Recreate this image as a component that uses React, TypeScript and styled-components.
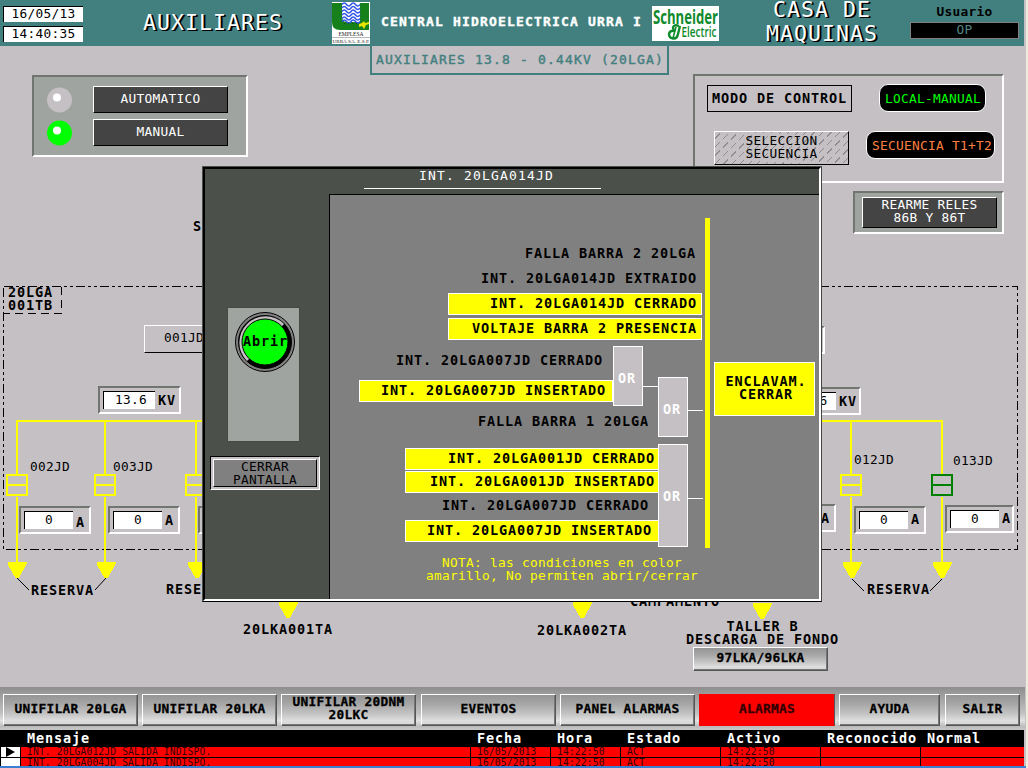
import React from "react";
import styled, { createGlobalStyle, css } from "styled-components";

const C = {
  face: "#c5c0c4",
  teal: "#427f7f",
  slate: "#4b504b",
  steel: "#a0a4a0",
  shade: "#707570",
  yellow: "#ffff00",
  button: "#444444",
};

const Global = createGlobalStyle`
  * { box-sizing: border-box; }
  body { margin: 0; background: ${C.face}; overflow: hidden; }
`;

/* Monospaced text with an exact character advance. */
const type = (size: number, advance: number, weight = 400) => css`
  font-family: "DejaVu Sans Mono", "Liberation Mono", monospace;
  font-size: ${size}px;
  font-weight: ${weight};
  letter-spacing: ${(advance - size * 0.602).toFixed(3)}px;
  white-space: pre;
`;
const thin = css`${type(12.8, 8)} line-height: 13px;`;
const wide = css`${type(13.5, 9, 700)} line-height: 13px;`;
const heavy = css`${type(12.8, 8, 700)} line-height: 13px;`;

const sunken = css`
  border: 2px solid;
  border-color: ${C.shade} #fff #fff ${C.shade};
`;
const raised = css`
  border: 1px solid;
  border-color: #fff #000 #000 #fff;
`;

const Screen = styled.div`
  width: 1028px;
  height: 768px;
  display: flex;
  flex-direction: column;
  overflow: hidden;
  background: ${C.face};
  border-right: 2px solid #efecdc;
`;

/* ---------- header ---------- */
const Header = styled.header`
  flex: none;
  width: 1024px;
  height: 46px;
  display: flex;
  align-items: flex-start;
  background: ${C.teal};
`;
const Clock = styled.div`
  width: 80px;
  margin: 6px 0 0 3px;
  display: flex;
  flex-direction: column;
  gap: 4px;
`;
const ClockCell = styled.div`
  ${thin}
  height: 16px;
  background: #fff;
  border-top: 1px solid #000;
  border-left: 1px solid #000;
  text-align: center;
`;
const BigTitle = styled.h1<{ $left: number; $top: number; $w: number }>`
  ${type(21.5, 14)}
  line-height: 24px;
  margin: ${(p) => p.$top}px 0 0 ${(p) => p.$left}px;
  width: ${(p) => p.$w}px;
  flex: none;
  color: #fff;
  text-align: center;
  text-shadow: 1px 1px 0 #000, 2px 1px 0 #000;
`;
const Logo = styled.svg<{ $left: number; $top: number }>`
  display: block;
  flex: none;
  margin: ${(p) => p.$top}px 0 0 ${(p) => p.$left}px;
`;
const Plant = styled.div`
  ${type(13, 9, 700)}
  line-height: 13px;
  width: 261px;
  flex: none;
  margin: 15px 0 0 11px;
  color: #fff;
  -webkit-text-stroke: 0.4px #fff;
`;
const User = styled.div`
  width: 109px;
  margin: 5px 0 0 31px;
  text-align: center;
`;
const UserLabel = styled.div`${heavy}`;
const UserField = styled.div`
  ${thin}
  margin-top: 4px;
  height: 17px;
  background: #000;
  border: 1px solid #808080;
  color: #4f8686;
  line-height: 14px;
`;

/* ---------- stage ---------- */
const Stage = styled.main`
  flex: none;
  position: relative;
  height: 641px;
`;
const TopRow = styled.div`
  height: 170px;
  display: flex;
  align-items: flex-start;
`;
const ModePanel = styled.section`
  ${sunken}
  flex: none;
  width: 216px;
  height: 82px;
  margin: 29px 0 0 32px;
  padding: 9px 18px 0 13px;
  display: flex;
  flex-direction: column;
  gap: 6px;
  background: ${C.steel};
`;
const ModeRow = styled.div`
  display: flex;
  align-items: center;
  justify-content: space-between;
  height: 27px;
`;
const DarkButton = styled.button`
  ${thin}
  ${raised}
  width: 135px;
  height: 27px;
  padding: 0 0 2px;
  background: ${C.button};
  color: #fff;
`;
const Tab = styled.div`
  ${type(13, 9, 400)}
  -webkit-text-stroke: 0.4px ${C.teal};
  flex: none;
  width: 299px;
  height: 31px;
  margin: -2px 0 0 122px;
  border: 2px solid ${C.teal};
  background: ${C.face};
  color: ${C.teal};
  line-height: 28px;
  padding-left: 4px;
`;
const RightColumn = styled.div`
  flex: none;
  width: 311px;
  margin: 28px 0 0 24px;
  display: flex;
  flex-direction: column;
  align-items: flex-end;
`;
const ControlPanel = styled.section`
  ${sunken}
  width: 311px;
  height: 109px;
  padding: 8px 7px 0 12px;
`;
const ControlRow = styled.div<{ $l: number; $r: number; $t: number }>`
  display: flex;
  justify-content: space-between;
  padding: 0 ${(p) => p.$r}px 0 ${(p) => p.$l}px;
  margin-top: ${(p) => p.$t}px;
`;
const ModeLabel = styled.div`
  ${wide}
  width: 145px;
  height: 27px;
  margin-top: 1px;
  border: 1px solid #000;
  text-align: center;
  line-height: 24px;
`;
const Pill = styled.div<{ $w: number; $color: string }>`
  ${thin}
  width: ${(p) => p.$w}px;
  height: 28px;
  border: 1px solid #fff;
  border-radius: 9px;
  background: #000;
  color: ${(p) => p.$color};
  padding-left: 5px;
  line-height: 27px;
`;
const SequenceButton = styled.button`
  ${thin}
  width: 135px;
  height: 34px;
  padding: 0 0 2px;
  border: 1px solid;
  border-color: #fff #000 #000 #fff;
  background: repeating-linear-gradient(to right, transparent 0 5px, ${C.face} 5px 8px),
    repeating-linear-gradient(135deg, ${C.face} 0 4px, #8f8c8f 4px 5px, ${C.face} 5px 6px);
  color: #000;
`;
const ResetPanel = styled.section`
  ${sunken}
  width: 151px;
  height: 43px;
  margin-top: 8px;
  padding: 4px 5px 0 7px;
  background: ${C.steel};
`;
const ResetButton = styled(DarkButton)`
  display: block;
  height: 31px;
  padding: 0 0 3px;
`;

/* ---------- mimic diagram ---------- */
const ORIGIN = 216;
const Mimic = styled.section`
  position: relative;
  height: 471px;
`;
const Lines = styled.svg`
  position: absolute;
  left: 0;
  top: 0;
`;
const Tag = styled.div<{ $x: number; $y: number; $thin?: boolean }>`
  ${(p) => (p.$thin ? thin : wide)}
  position: absolute;
  left: ${(p) => p.$x}px;
  top: ${(p) => p.$y - ORIGIN - 2}px;
  text-align: center;
`;
const Meter = styled.div<{ $x: number; $y: number; $w: number }>`
  ${sunken}
  position: absolute;
  left: ${(p) => p.$x}px;
  top: ${(p) => p.$y - ORIGIN}px;
  width: ${(p) => p.$w}px;
  height: 28px;
  padding: 3px 0 0 3px;
  display: flex;
  gap: 3px;
  background: ${C.face};
`;
const MeterValue = styled.div<{ $w: number }>`
  ${thin}
  flex: none;
  width: ${(p) => p.$w}px;
  height: 18px;
  border-top: 1px solid #000;
  border-left: 1px solid #000;
  background: #fff;
  text-align: center;
  line-height: 16px;
  padding-left: ${(p) => (p.$w > 50 ? 3 : 0)}px;
`;
const MeterUnit = styled.div<{ $drop: number }>`
  ${wide}
  margin-top: ${(p) => p.$drop}px;
`;
const FeederButton = styled.div<{ $x: number; $y: number }>`
  ${thin}
  ${raised}
  position: absolute;
  left: ${(p) => p.$x}px;
  top: ${(p) => p.$y - ORIGIN}px;
  width: 90px;
  height: 28px;
  padding-left: 19px;
  line-height: 24px;
`;
const Stub = styled.div`
  ${sunken}
  position: absolute;
  left: 760px;
  top: ${326 - ORIGIN}px;
  width: 65px;
  height: 28px;
`;
const metal = css`
  background: linear-gradient(#959595 0%, #a6a6a6 30%, #c6c6c6 65%, #dedede 85%, #d6d6d6 100%);
  border: 1px solid;
  border-color: #fff #555 #555 #fff;
  box-shadow: inset -1px -1px 0 #777;
`;
const SubButton = styled.button`
  ${heavy}
  ${metal}
  -webkit-text-stroke: 0.3px #000;
  position: absolute;
  left: 693px;
  top: ${647 - ORIGIN}px;
  width: 135px;
  height: 24px;
  padding: 0 0 4px;
  color: #000;
`;

/* ---------- dialog ---------- */
const Dialog = styled.div`
  position: absolute;
  left: 202px;
  top: 120px;
  width: 620px;
  height: 436px;
  border: 1px solid;
  border-color: ${C.slate} #444 #000 ${C.slate};
`;
const DialogFrame = styled.div`
  width: 618px;
  height: 434px;
  border: 2px solid;
  border-color: #000 #fff #fff #000;
  background: ${C.slate};
  display: flex;
  flex-direction: column;
`;
const DialogTitle = styled.div`
  ${type(13, 9)}
  height: 25px;
  line-height: 14px;
  color: #fff;
  display: flex;
  justify-content: center;
  padding-right: 60px;
`;
const TitleRule = styled.div`
  width: 237px;
  height: 20px;
  padding-left: 9px;
  border-bottom: 1px solid #fff;
  text-align: center;
`;
const DialogBody = styled.div`
  flex: 1;
  display: flex;
`;
const Commands = styled.div`
  flex: none;
  width: 124px;
  display: flex;
  flex-direction: column;
  padding-top: 114px;
`;
const OpenCard = styled.div`
  width: 71px;
  height: 133px;
  margin-left: 23px;
  padding: 4px 0 0 7px;
  background: ${C.steel};
  outline: 1px solid #464a46;
`;
const OpenButton = styled.div`
  position: relative;
  width: 60px;
  height: 60px;
`;
const OpenLabel = styled.span`
  ${wide}
  position: absolute;
  left: 8px;
  top: 23px;
`;
const CloseFrame = styled.div`
  width: 110px;
  height: 34px;
  margin: 15px 0 0 5px;
  border: 1px solid;
  border-color: #000 #fff #fff #000;
  background: ${C.face};
  padding: 2px;
`;
const CloseButton = styled.button`
  ${thin}
  display: block;
  width: 104px;
  height: 28px;
  padding: 0 0 4px;
  border: 1px solid;
  border-color: #fff #000 #000 #fff;
  background: #808080;
  color: #000;
`;
const Workspace = styled.div`
  flex: none;
  width: 490px;
  border-left: 1px solid #000;
  border-top: 1px solid #000;
  background: #808080;
  display: flex;
  align-items: flex-start;
`;
const Logic = styled.div`
  flex: none;
  width: 375px;
  padding-top: 48px;
`;
const Group = styled.div<{ $left: number; $top: number; $h: number }>`
  display: flex;
  align-items: flex-start;
  height: ${(p) => p.$h}px;
  margin: ${(p) => p.$top}px 0 0 ${(p) => p.$left}px;
`;
const Conditions = styled.div<{ $top?: number; $w?: number }>`
  flex: none;
  width: ${(p) => p.$w ?? 254}px;
  padding-top: ${(p) => p.$top ?? 0}px;
`;
const Condition = styled.div<{ $on?: boolean; $gap?: number; $pad: number; $w?: number }>`
  ${wide}
  width: ${(p) => p.$w ?? 254}px;
  height: 22px;
  margin-top: ${(p) => p.$gap ?? 0}px;
  padding-right: ${(p) => p.$pad - 1}px;
  border: 1px solid ${(p) => (p.$on ? "#fff" : "transparent")};
  background: ${(p) => (p.$on ? C.yellow : "transparent")};
  text-align: right;
  line-height: 18px;
`;
const Gate = styled.div<{ $top: number; $h: number; $text: number }>`
  ${wide}
  position: relative;
  flex: none;
  width: 30px;
  height: ${(p) => p.$h}px;
  margin-top: ${(p) => p.$top}px;
  padding: ${(p) => p.$text}px 0 0 4px;
  border: 1px solid #fff;
  background: ${C.face};
  color: #fff;
`;
const Wire = styled.div<{ $top: number }>`
  flex: none;
  width: 15px;
  height: 1px;
  margin-top: ${(p) => p.$top}px;
  background: #fff;
`;
const Note = styled.p`
  ${thin}
  width: 290px;
  margin: 9px 0 0 87px;
  color: ${C.yellow};
  text-align: center;
`;
const Rail = styled.div`
  flex: none;
  width: 5px;
  height: 330px;
  margin-top: 23px;
  background: ${C.yellow};
`;
const Interlock = styled.div`
  ${wide}
  flex: none;
  width: 101px;
  height: 54px;
  margin: 167px 0 0 4px;
  padding: 12px 0 0 3px;
  border: 1px solid #fff;
  background: ${C.yellow};
  text-align: center;
`;

/* ---------- navigation ---------- */
const Nav = styled.nav`
  flex: none;
  width: 1025px;
  height: 43px;
  padding: 7px 0 0 3px;
  display: flex;
  background: linear-gradient(#8e8e8e 0%, #a2a2a2 25%, #c2c2c2 62%, #e2e2e2 78%, #bcbcbc 92%, #c8c8c8 100%);
`;
const NavButton = styled.button<{ $w: number; $gap: number; $alarm?: boolean }>`
  ${heavy}
  ${metal}
  -webkit-text-stroke: 0.3px ${(p) => (p.$alarm ? "#300" : "#000")};
  flex: none;
  width: ${(p) => p.$w}px;
  height: 32px;
  margin-right: ${(p) => p.$gap}px;
  padding: 0 0 4px;
  color: #000;
  ${(p) => p.$alarm && css`background: #f00; border-color: #f00 #555 #f00 #f00; box-shadow: none; color: #300;`}
`;

/* ---------- alarm table ---------- */
const columns = css`
  display: grid;
  grid-template-columns: 20px 450px 80px 70px 100px 100px 100px 104px;
  width: 1024px;
`;
const AlarmTable = styled.section`
  flex: none;
  height: 36px;
  overflow: hidden;
  width: 1024px;
  background: #000;
`;
const AlarmHead = styled.div`
  ${wide}
  ${columns}
  height: 17px;
  color: #fff;
  line-height: 16px;
`;
const HeadCell = styled.span`padding-left: 7px;`;
const AlarmRow = styled.div`
  ${type(9.6, 5.95)}
  ${columns}
  height: 10px;
  margin-bottom: 1px;
  line-height: 10px;
  color: #300;
`;
const AlarmCell = styled.span`
  margin-left: 1px;
  padding-left: 6px;
  background: #f00;
  overflow: hidden;
  height: 10px;
`;
const Marker = styled.span`
  margin-left: 1px;
  height: 10px;
  background: #fff;
`;
const TaskLine = styled.div`
  flex: none;
  height: 2px;
  background: #3a7fd0;
`;

const Led = ({ color }: { color: string }) => (
  <svg width="26" height="26" viewBox="0 0 26 26">
    <circle cx="12.5" cy="13" r="12.5" fill={color} />
    <circle cx="10" cy="10.5" r="4" fill="#fff" />
  </svg>
);

const UrraLogo = () => (
  <Logo $left={48} $top={2} width="38" height="42" viewBox="0 0 38 42">
    <rect width="38" height="42" fill="#fff" />
    <path d="M0 1H10V14Q10 20 15 20H28V1H37V28H8Q0 28 0 20Z" fill="#16811b" />
    {[2.5, 6, 9.5, 13, 16.5, 19.5].map((y) => (
      <path
        key={y}
        d={`M10 ${y}q2.2-3 4.5 0t4.5 0t4.5 0t4.5 0`}
        fill="none"
        stroke="#3156e8"
        strokeWidth="1.6"
      />
    ))}
    <path d="M27 22l3-1l2-2l1 2l4-1v2l-3 1l-2 4l-2-3l-3 1z" fill="#e6e600" />
    <path d="M12 21.5h15" stroke="#0a4d10" strokeDasharray="1 3" />
    <text x="6.5" y="33.5" fontFamily="Liberation Serif, serif" fontSize="5.5" textLength="25" fill="#222">EMPLESA</text>
    <path d="M0 35.5h38" stroke="#999" strokeWidth=".7" />
    <text x="0.5" y="40.6" fontFamily="Liberation Serif, serif" fontSize="5" textLength="37" lengthAdjust="spacingAndGlyphs" fill="#222">URRÁ SA. E.S.P.</text>
  </Logo>
);

const SchneiderLogo = () => (
  <Logo $left={10} $top={6} width="67" height="35" viewBox="0 0 67 35">
    <rect width="67" height="35" fill="#fff" />
    <text x="1" y="18" fontFamily="Open Sans, sans-serif" fontWeight="700" fontSize="20" textLength="65" lengthAdjust="spacingAndGlyphs" fill="#0f8a2c">Schneider</text>
    <text x="29.5" y="31" fontFamily="Open Sans, sans-serif" fontWeight="600" fontSize="13.5" textLength="35" lengthAdjust="spacingAndGlyphs" fill="#0f8a2c">Electric</text>
    <path
      d="M27 20q-5-2-6 1.500q0 2.500 2 3.500q-5-1-6 3q0 4 4 4.500q4 .500 5-4.500l2-8"
      fill="none"
      stroke="#0f8a2c"
      strokeWidth="2.4"
    />
    <path d="M24 21l-3 11" stroke="#0f8a2c" strokeWidth="1.6" />
  </Logo>
);

const Arrow = ({ x, y }: { x: number; y: number }) => (
  <path d={`M${x - 9.5} ${y}h19v2l-7.500 14h-3.500l-8-14z`} fill={C.yellow} />
);

const Feeder = ({ x, color = C.yellow, ax = x }: { x: number; color?: string; ax?: number }) => (
  <g>
    <path d={`M${x} 421V474M${x} 497V563`} stroke={C.yellow} strokeWidth="2" />
    <rect x={x - 10} y="475" width="20" height="20" fill="none" stroke={color} strokeWidth="2" />
    <path d={`M${x - 10} 485h20`} stroke={color} strokeWidth="2" />
    <Arrow x={ax} y={562} />
  </g>
);

const Reading = (p: { x: number; y: number; w: number; field: number; value: string; unit: string; drop: number }) => (
  <Meter $x={p.x} $y={p.y} $w={p.w}>
    <MeterValue $w={p.field}>{p.value}</MeterValue>
    <MeterUnit $drop={p.drop}>{p.unit}</MeterUnit>
  </Meter>
);

const tags: [number, number, string, boolean?][] = [
  [193, 222, "S"],
  [8, 288, "20LGA\n001TB"],
  [30, 462, "002JD", true],
  [113, 462, "003JD", true],
  [854, 455, "012JD", true],
  [953, 456, "013JD", true],
  [31, 586, "RESERVA"],
  [166, 585, "RESERVA"],
  [867, 585, "RESERVA"],
  [243, 625, "20LKA001TA"],
  [537, 626, "20LKA002TA"],
  [630, 597, "CAMPAMENTO"],
  [686, 622, "TALLER B\nDESCARGA DE FONDO"],
];

const navItems: [string, number, number, boolean?][] = [
  ["UNIFILAR 20LGA", 135, 4],
  ["UNIFILAR 20LKA", 135, 4],
  ["UNIFILAR 20DNM\n20LKC", 135, 5],
  ["EVENTOS", 135, 4],
  ["PANEL ALARMAS", 135, 4],
  ["ALARMAS", 136, 4, true],
  ["AYUDA", 101, 5],
  ["SALIR", 75, 0],
];

const alarms = [
  ["INT. 20LGA012JD SALIDA INDISPO.", "16/05/2013", "14:22:50", "ACT", "14:22:50", "", ""],
  ["INT. 20LGA004JD SALIDA INDISPO.", "16/05/2013", "14:22:50", "ACT", "14:22:50", "", ""],
];

export default function App() {
  return (
    <Screen>
      <Global />
      <Header>
        <Clock>
          <ClockCell>16/05/13</ClockCell>
          <ClockCell>14:40:35</ClockCell>
        </Clock>
        <BigTitle $left={59} $top={11} $w={142}>AUXILIARES</BigTitle>
        <UrraLogo />
        <Plant>CENTRAL HIDROELECTRICA URRA I</Plant>
        <SchneiderLogo />
        <BigTitle $left={46} $top={-2} $w={114}>{"CASA DE\nMAQUINAS"}</BigTitle>
        <User>
          <UserLabel>Usuario</UserLabel>
          <UserField>OP</UserField>
        </User>
      </Header>

      <Stage>
        <TopRow>
          <ModePanel>
            <ModeRow><Led color={C.face} /><DarkButton>AUTOMATICO</DarkButton></ModeRow>
            <ModeRow><Led color="#00ff00" /><DarkButton>MANUAL</DarkButton></ModeRow>
          </ModePanel>
          <Tab>AUXILIARES 13.8 - 0.44KV (20LGA)</Tab>
          <RightColumn>
            <ControlPanel>
              <ControlRow $l={0} $r={9} $t={0}>
                <ModeLabel>MODO DE CONTROL</ModeLabel>
                <Pill $w={107} $color="#00ff00">LOCAL-MANUAL</Pill>
              </ControlRow>
              <ControlRow $l={7} $r={0} $t={19}>
                <SequenceButton>{"SELECCION\nSECUENCIA"}</SequenceButton>
                <Pill $w={129} $color="#ff8040">SECUENCIA T1+T2</Pill>
              </ControlRow>
            </ControlPanel>
            <ResetPanel>
              <ResetButton>{"REARME RELES\n86B Y 86T"}</ResetButton>
            </ResetPanel>
          </RightColumn>
        </TopRow>

        <Mimic>
          <Lines width="1026" height="471" viewBox="0 216 1026 471">
            <g fill="none" stroke="#000" strokeDasharray="9 3 3 3 3 3" shapeRendering="crispEdges">
              <path d="M3.500 286.500H1017.500V549.500H3.500Z" />
              <path d="M61.500 287V313.500H4" strokeDasharray="8 5" />
            </g>
            <g shapeRendering="crispEdges">
              <path d="M16 421H943" stroke={C.yellow} strokeWidth="2" />
              <Feeder x={17} />
              <Feeder x={105} ax={106} />
              <Feeder x={196} ax={197} />
              <Feeder x={851} ax={852} />
              <Feeder x={942} color="#008000" />
              <Arrow x={288} y={602} />
              <Arrow x={582} y={602} />
              <Arrow x={762} y={603} />
            </g>
            <path
              d="M17 578l12 12M106 578l-11 12M852 579l12 12M942 579l-12 12"
              stroke="#000"
              fill="none"
            />
          </Lines>
          {tags.map(([x, y, text, isThin], i) => (
            <Tag key={i} $x={x} $y={y} $thin={isThin}>{text}</Tag>
          ))}
          <FeederButton $x={144} $y={325}>001JD</FeederButton>
          <Stub />
          <Reading x={98} y={386} w={83} field={52} value="13.6" unit="KV" drop={3} />
          <Reading x={778} y={387} w={83} field={53} value="13.6" unit="KV" drop={3} />
          <Reading x={19} y={506} w={72} field={49} value="0" unit="A" drop={5} />
          <Reading x={108} y={506} w={72} field={49} value="0" unit="A" drop={3} />
          <Reading x={198} y={506} w={72} field={49} value="0" unit="A" drop={3} />
          <Reading x={764} y={504} w={72} field={49} value="0" unit="A" drop={3} />
          <Reading x={854} y={506} w={72} field={49} value="0" unit="A" drop={2} />
          <Reading x={945} y={505} w={69} field={49} value="0" unit="A" drop={2} />
          <SubButton>97LKA/96LKA</SubButton>
        </Mimic>

        <Dialog>
          <DialogFrame>
            <DialogTitle><TitleRule>INT. 20LGA014JD</TitleRule></DialogTitle>
            <DialogBody>
              <Commands>
                <OpenCard>
                  <OpenButton>
                    <svg width="60" height="60" viewBox="0 0 60 60">
                      <circle cx="30" cy="30" r="29.500" fill="#808080" stroke="#000" />
                      <circle cx="30" cy="30" r="26.500" fill="#000" stroke="#000" />
                      <path d="M12 49A26 26 0 0 1 49 12Z" fill={C.face} />
                      <circle cx="30" cy="30" r="23" fill="#00ff00" stroke="#000" />
                    </svg>
                    <OpenLabel>Abrir</OpenLabel>
                  </OpenButton>
                </OpenCard>
                <CloseFrame><CloseButton>{"CERRAR\nPANTALLA"}</CloseButton></CloseFrame>
              </Commands>
              <Workspace>
                <Logic>
                  <Group $left={118} $top={0} $h={97}>
                    <Conditions>
                      <Condition $pad={6}>FALLA BARRA 2 20LGA</Condition>
                      <Condition $pad={5} $gap={3}>INT. 20LGA014JD EXTRAIDO</Condition>
                      <Condition $pad={5} $gap={3} $on>INT. 20LGA014JD CERRADO</Condition>
                      <Condition $pad={5} $gap={3} $on>VOLTAJE BARRA 2 PRESENCIA</Condition>
                    </Conditions>
                  </Group>
                  <Group $left={29} $top={6} $h={91}>
                    <Conditions $top={4}>
                      <Condition $pad={10}>INT. 20LGA007JD CERRADO</Condition>
                      <Condition $pad={7} $gap={8} $on>INT. 20LGA007JD INSERTADO</Condition>
                      <Condition $pad={9} $gap={9} $w={299}>FALLA BARRA 1 20LGA</Condition>
                    </Conditions>
                    <Gate $top={0} $h={60} $text={25}>OR</Gate>
                    <Wire $top={40} />
                    <Gate $top={31} $h={60} $text={25}>OR</Gate>
                    <Wire $top={64} />
                  </Group>
                  <Group $left={75} $top={7} $h={103}>
                    <Conditions $top={4} $w={253}>
                      <Condition $pad={4} $on>INT. 20LGA001JD CERRADO</Condition>
                      <Condition $pad={4} $gap={1} $on>INT. 20LGA001JD INSERTADO</Condition>
                      <Condition $pad={10} $gap={2}>INT. 20LGA007JD CERRADO</Condition>
                      <Condition $pad={7} $gap={3} $on>INT. 20LGA007JD INSERTADO</Condition>
                    </Conditions>
                    <Gate $top={0} $h={103} $text={45}>OR</Gate>
                    <Wire $top={54} />
                  </Group>
                  <Note>{"NOTA: las condiciones en color\namarillo, No permiten abrir/cerrar"}</Note>
                </Logic>
                <Rail />
                <Interlock>{"ENCLAVAM.\nCERRAR"}</Interlock>
              </Workspace>
            </DialogBody>
          </DialogFrame>
        </Dialog>
      </Stage>

      <Nav>
        {navItems.map(([label, w, gap, alarm]) => (
          <NavButton key={label} $w={w} $gap={gap} $alarm={alarm}>{label}</NavButton>
        ))}
      </Nav>
      <AlarmTable>
        <AlarmHead>
          {["", "Mensaje", "Fecha", "Hora", "Estado", "Activo", "Reconocido", "Normal"].map((h) => (
            <HeadCell key={h}>{h}</HeadCell>
          ))}
        </AlarmHead>
        {alarms.map((row, r) => (
          <AlarmRow key={r}>
            <Marker>
              {r === 0 && (
                <svg width="18" height="10" viewBox="0 0 18 10" style={{ display: "block" }}>
                  <path d="M5 0L14 5L5 10Z" fill="#000" />
                </svg>
              )}
            </Marker>
            {row.map((cell, i) => (
              <AlarmCell key={i}>{cell}</AlarmCell>
            ))}
          </AlarmRow>
        ))}
      </AlarmTable>
      <TaskLine />
    </Screen>
  );
}
